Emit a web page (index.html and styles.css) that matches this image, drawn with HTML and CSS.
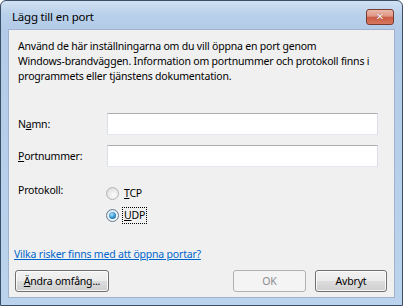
FILE: index.html
```html
<!DOCTYPE html>
<html lang="sv">
<head>
    <meta charset="UTF-8">
    <title>Lägg till en port</title>
    <link rel="stylesheet" href="styles.css">
</head>
<body>
    <div class="window">
        <div class="titlebar">
            <span class="title">Lägg till en port</span>
            <span class="close-btn"><span class="close-x">✕</span></span>
        </div>
        <div class="client">
            <p class="intro">Använd de här inställningarna om du vill öppna en port genom<br>Windows-brandväggen. Information om portnummer och protokoll finns i<br>programmets eller tjänstens dokumentation.</p>

            <div class="form-row first">
                <span class="label">N<u>a</u>mn:</span>
                <span class="textbox"></span>
            </div>
            <div class="form-row">
                <span class="label"><u>P</u>ortnummer:</span>
                <span class="textbox"></span>
            </div>
            <div class="form-row protocol">
                <span class="label">Protokoll:</span>
                <div class="radio-group">
                    <div class="radio-option">
                        <span class="radio"></span>
                        <span class="radio-text"><u>T</u>CP</span>
                    </div>
                    <div class="radio-option">
                        <span class="radio checked"></span>
                        <span class="radio-text focused"><u>U</u>DP</span>
                    </div>
                </div>
            </div>

            <a class="help-link">Vilka risker finns med att öppna portar?</a>

            <div class="button-row">
                <span class="button scope"><u>Ä</u>ndra omfång...</span>
                <span class="spacer"></span>
                <span class="button disabled">OK</span>
                <span class="button">Avbryt</span>
            </div>
        </div>
    </div>
</body>
</html>
```

FILE: styles.css
```css
:root {
    --frame-border: #3a4f66;
    --client-bg: #f0f0f0;
    --text-color: #000;
    --link-color: #0066cc;
}

body {
    margin: 0;
    font-family: "Noto Sans", "Open Sans", sans-serif;
    font-size: 10.5px;
    letter-spacing: -0.2px;
    color: var(--text-color);
}

.window {
    width: 403px;
    height: 306px;
    box-sizing: border-box;
    border: 1px solid var(--frame-border);
    border-radius: 6px 6px 0 0;
    background: linear-gradient(#d0e1f3 0, #b9d0ea 14px, #b3cbe8 28px, #bcd3ed 100%);
    padding: 0 7px 7px;
    display: flex;
    flex-direction: column;
}

.titlebar {
    height: 28px;
    display: flex;
    align-items: center;
    justify-content: space-between;
    padding-left: 4px;
}
.title {
    font-size: 11.5px;
    letter-spacing: -0.2px;
    margin-top: 2px;
}
.close-btn {
    width: 28px;
    height: 16px;
    margin-top: 3px;
    margin-right: 1px;
    box-sizing: border-box;
    border: 1px solid #7a3b30;
    border-radius: 3px;
    background: linear-gradient(#ecb9ab 0, #df9584 45%, #cb5a43 50%, #d8775f 100%);
    display: flex;
    align-items: center;
    justify-content: center;
}
.close-x {
    color: #fff;
    font-family: "DejaVu Sans", sans-serif;
    font-size: 10px;
    font-weight: bold;
    line-height: 10px;
    letter-spacing: 0;
    text-shadow: 0 0 1px #6a2a20;
}

.client {
    flex: 1;
    background-color: var(--client-bg);
    border: 1px solid #9fb4cc;
    padding: 9px 7px 5px 5px;
    display: flex;
    flex-direction: column;
}

.intro {
    margin: 0;
    padding-left: 4px;
    line-height: 15px;
    white-space: nowrap;
}

.form-row {
    display: flex;
    align-items: center;
    padding-left: 4px;
    margin-top: 10px;
}
.form-row.first {
    margin-top: 29px;
}
.label {
    width: 89px;
}
.textbox {
    width: 271px;
    height: 22px;
    box-sizing: border-box;
    background: #fff;
    border: 1px solid #dbdfe6;
    border-top-color: #abadb3;
    border-bottom-color: #e3e9ef;
}

.form-row.protocol {
    align-items: flex-start;
    margin-top: 16px;
    line-height: 15px;
}
.radio-group {
    display: flex;
    flex-direction: column;
    gap: 7px;
    padding-top: 3px;
    margin-left: -1px;
}
.radio-option {
    display: flex;
    align-items: center;
    gap: 3px;
    height: 15px;
}
.radio {
    width: 13px;
    height: 13px;
    box-sizing: border-box;
    border-radius: 50%;
    border: 1px solid #b4b4b4;
    background: radial-gradient(circle at 60% 65%, #fbfbfb 0, #e6e6e6 60%, #d2d2d2 100%);
    display: flex;
    align-items: center;
    justify-content: center;
}
.radio.checked {
    border-color: #5e7d96;
    background: radial-gradient(circle at 60% 65%, #ffffff 0, #e8eef3 60%, #c9d3dc 100%);
}
.radio.checked::after {
    content: "";
    width: 7px;
    height: 7px;
    border-radius: 50%;
    background: radial-gradient(circle at 40% 35%, #a9e0fb 0, #2f8fcb 55%, #0f4e86 100%);
}
.radio-text {
    padding: 0 1px;
    border: 1px dotted transparent;
}
.radio-text.focused {
    border-color: #000;
}

.help-link {
    color: var(--link-color);
    text-decoration: underline;
    margin-top: 24px;
    line-height: 15px;
    cursor: pointer;
    align-self: flex-start;
}

.button-row {
    display: flex;
    margin-top: 8px;
    gap: 9px;
    padding-left: 1px;
}
.spacer {
    flex: 1;
}
.button {
    width: 72px;
    height: 22px;
    box-sizing: border-box;
    border: 1px solid #707070;
    border-radius: 3px;
    background: linear-gradient(#f2f2f2 0, #ebebeb 50%, #dddddd 50%, #cfcfcf 100%);
    box-shadow: inset 0 0 0 1px rgba(255, 255, 255, 0.8);
    display: flex;
    align-items: center;
    justify-content: center;
}
.button.scope {
    width: 94px;
}
.button.disabled {
    width: 73px;
    color: #8d8d8d;
    border-color: #adb2b5;
    background: #f4f4f4;
    box-shadow: none;
}
```
